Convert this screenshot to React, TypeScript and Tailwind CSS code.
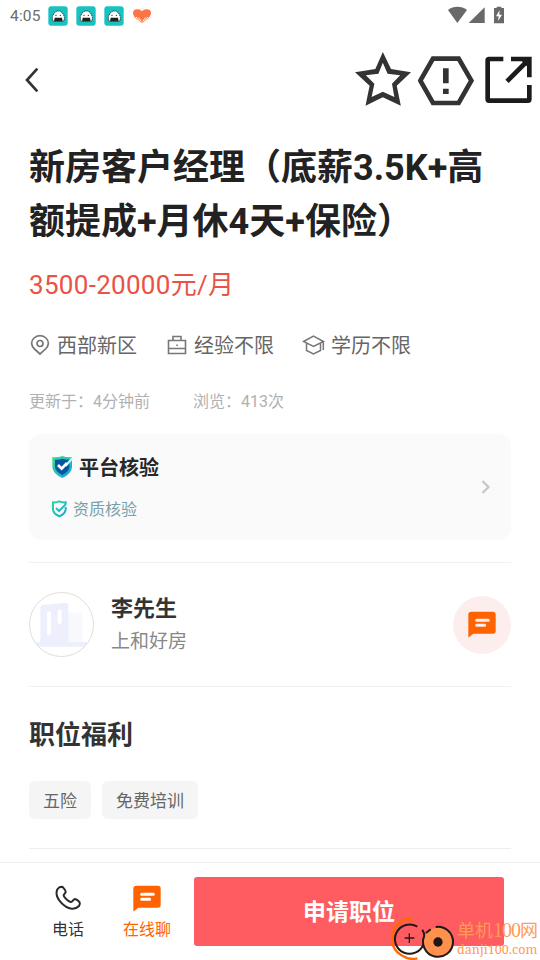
import React from "react";

function AppBadge() {
  return (
    <svg width="20" height="20" viewBox="0 0 60 60">
      <rect x="1" y="1" width="58" height="58" rx="9" fill="#17c2c0" />
      <path d="M13 44V31L19 20L27 15H36L43 20L49 31V44L43 46H19Z" fill="#fff" stroke="#173c3c" strokeWidth="3" strokeDasharray="4 2" />
      <circle cx="24" cy="28" r="2" fill="#222" />
      <circle cx="37" cy="28" r="2" fill="#222" />
      <path d="M20 35H42L44 46H18Z" fill="#1f2020" />
    </svg>
  );
}

function HeartIcon() {
  return (
    <svg width="20" height="18" viewBox="0 0 60 54">
      <circle cx="30" cy="26" r="24" fill="#fff3e4" />
      <path d="M30 47C17 38 3 30 3 17C3 4 23 4 30 13C37 4 57 4 57 17C57 30 43 38 30 47Z" fill="#fb7546" />
      <path d="M12 30L25 46M19 31L28 43M48 30L35 46M41 31L32 43" stroke="#fff1df" strokeWidth="3" />
    </svg>
  );
}

function StatusBar() {
  return (
    <div className="flex h-8 shrink-0 items-center pl-[10px] pr-[35px]">
      <span className="w-[38px] pt-px text-[15.5px] tracking-[0.2px] text-[#6c6c6c]">4:05</span>
      <div className="flex items-center gap-2">
        <AppBadge />
        <AppBadge />
        <AppBadge />
        <HeartIcon />
      </div>
      <svg className="mb-[3px] ml-auto" width="57" height="18" viewBox="324 16 171 54" fill="#696969">
        <path d="M324 28C340 15 365 15 381 28L352 67Z" />
        <path d="M434 20V67H386Z" />
        <path d="M470 18H484V22H492V68H462V22H470Z" />
        <path d="M479 29L468 47H476L474 61L486 42H478Z" fill="#fff" />
      </svg>
    </div>
  );
}

function Header() {
  return (
    <header className="flex h-24 shrink-0 items-center pl-6 pr-2">
      <svg className="mr-auto" width="16" height="26" viewBox="72 201 48 78" fill="none" stroke="#333" strokeWidth="8">
        <path d="M112 206L81 240L112 274" strokeLinejoin="miter" />
      </svg>
      <svg className="mb-[2px]" width="56" height="54" viewBox="45 157 165 162" preserveAspectRatio="none" fill="#333">
        <path fillRule="evenodd" d="M127 157L151 208L210 218L168 258L180 318L127 293L76 318L88 258L45 218L105 208ZM127 189L114 222L77 227L102 252L94 292L127 276L161 292L154 252L178 227L141 222Z" />
      </svg>
      <svg className="ml-[7px] mt-px" width="56" height="50" viewBox="233 167 168 150">
        <path d="M278 175H355L393 241L355 308H278L240 241Z" fill="none" stroke="#333" strokeWidth="14" />
        <path d="M308 204H325V249H308ZM308 265H325V281H308Z" fill="#333" />
      </svg>
      <svg className="ml-[11px]" width="47" height="48" viewBox="435 170 141 144" fill="none" stroke="#1b1b1b" strokeWidth="14">
        <path d="M490 179H447Q443 179 443 183V300Q443 304 447 304H564Q568 304 568 300V257" />
        <path d="M513 179H568V234M568 179L501 246" />
        <path d="M540 180H567V207Z" fill="#1b1b1b" stroke="none" />
      </svg>
    </header>
  );
}

function PinIcon() {
  return (
    <svg width="20" height="22" viewBox="0 0 20 22" fill="none" stroke="#777" strokeWidth="1.7">
      <path d="M10 20L4.5 15C.8 11.500.7 7.200 4 4C7.300.9 12.700.9 16 4C19.300 7.200 19.200 11.500 15.500 15Z" />
      <circle cx="10" cy="9.500" r="3" />
    </svg>
  );
}

function CaseIcon() {
  return (
    <svg width="20" height="22" viewBox="0 0 20 22" fill="none" stroke="#777" strokeWidth="1.600">
      <path d="M1.500 6.500H18.500V19.500H1.500ZM6 6V2.500H14V6M1.500 14.500H18.500M10 10.500V12" />
    </svg>
  );
}

function CapIcon() {
  return (
    <svg className="-ml-px" width="24" height="22" viewBox="0 0 24 22" fill="none" stroke="#777" strokeWidth="1.500">
      <path d="M1.500 7.500L11.500 2L21.500 7.500L11.500 12.500ZM4.500 9.300V16.500L11.500 20L18.500 16.500V9.300M21.300 8V16" />
    </svg>
  );
}

function ChatIcon({ line }: { line: string }) {
  return (
    <svg width="28" height="27" viewBox="0 0 84 81">
      <path d="M10 2H75Q83 2 83 10V60Q83 68 75 68H16L3 79Q1 80 1 76V10Q1 2 10 2Z" fill="#ff6200" />
      <path d="M26 28H61M26 43H50" stroke={line} strokeWidth="9" strokeLinecap="round" />
    </svg>
  );
}

function VerifyCard() {
  return (
    <section className="flex h-[106px] items-center rounded-xl bg-[#fafafa] pl-[22px] pr-5">
      <div>
        <div className="flex h-6 items-center gap-[6px]">
          <svg className="mt-px" width="22" height="24" viewBox="0 0 66 72">
            <defs>
              <linearGradient id="shield" x1="0" y1="0" x2="1" y2="1">
                <stop offset="0" stopColor="#35dc91" />
                <stop offset=".5" stopColor="#27bfbb" />
                <stop offset="1" stopColor="#159be3" />
              </linearGradient>
            </defs>
            <path d="M4 6Q20 8 34 3Q48 8 63 6V36Q62 56 34 69Q5 56 4 36Z" fill="url(#shield)" />
            <path d="M12 14Q24 15 34 11Q45 15 55 14V37Q54 50 34 60Q13 50 12 37Z" fill="#07569f" />
            <path d="M42 29L64 5V14L46 35Z" fill="#caffe4" />
            <path d="M21 30L32 41L48 24" fill="none" stroke="#fff" strokeWidth="8" />
          </svg>
          <h2 className="pt-[3px] text-[20px] font-bold leading-6 text-[#282828]">平台核验</h2>
        </div>
        <div className="mt-[18px] flex h-6 items-center gap-[5px]">
          <svg className="mt-[2px]" width="17" height="18" viewBox="0 0 51 54" fill="none" stroke="url(#mini)" strokeWidth="6">
            <defs>
              <linearGradient id="mini" x1="0" y1="0" x2="1" y2="1">
                <stop offset="0" stopColor="#26d99c" />
                <stop offset="1" stopColor="#19a9de" />
              </linearGradient>
            </defs>
            <path d="M44 12V7Q34 8 25 4Q16 8 6 7V28Q7 41 25 49Q43 41 44 28V21" />
            <path d="M15 24L24 33L45 12" />
          </svg>
          <span className="pt-[3px] text-[16px] leading-6 text-[#789fab]">资质核验</span>
        </div>
      </div>
      <svg className="ml-auto" width="10" height="16" viewBox="0 0 10 16" fill="none" stroke="#c7c7c7" strokeWidth="2.300">
        <path d="M1.500 2L7.500 8L1.500 14" />
      </svg>
    </section>
  );
}

function Recruiter() {
  return (
    <section className="flex h-[125px] items-center border-b border-t border-[#f1f1f1]">
      <svg width="65" height="65" viewBox="0 0 195 195">
        <defs>
          <clipPath id="avatar"><circle cx="97.500" cy="97.500" r="95" /></clipPath>
        </defs>
        <g clipPath="url(#avatar)">
          <path d="M118 62H151Q161 62 161 73V151H118Z" fill="#f8f8fd" />
          <path d="M34 46Q34 40 41 39L110 32Q118 32 118 40V150H195V164H0V150H34Z" fill="#edf0fc" />
          <path d="M60 64V124M92 59V90" stroke="#fff" strokeWidth="12" strokeLinecap="round" />
        </g>
        <circle cx="97.500" cy="97.500" r="96" fill="none" stroke="#dedede" strokeWidth="3" />
      </svg>
      <div className="ml-[17px] pt-px">
        <h2 className="text-[22px] font-bold leading-8 text-[#333]">李先生</h2>
        <p className="pt-px text-[19px] leading-8 text-[#888]">上和好房</p>
      </div>
      <div className="ml-auto flex size-[58px] items-center justify-center rounded-full bg-[#fdeeee]">
        <ChatIcon line="#fdeeee" />
      </div>
    </section>
  );
}

function Watermark() {
  return (
    <div className="absolute bottom-0 right-0 flex h-[44px] w-[149px] items-center">
      <svg className="shrink-0" width="64" height="44" viewBox="363 183 192 132" fill="none">
        <path d="M423 192Q413 186 403 194C358 216 353 275 394 301Q417 316 442 310" stroke="#ff6b00" strokeWidth="7" />
        <path d="M400 198Q414 183 428 199" stroke="#ff6b00" strokeWidth="9" />
        <path d="M442 215A44 44 0 1 0 460 268" stroke="#241818" strokeWidth="6" />
        <path d="M457 224C466 239 466 252 461 267" stroke="#241818" strokeWidth="6" />
        <circle cx="504" cy="261" r="43" fill="#ff914d" />
        <path d="M497 216A45 45 0 1 1 463 242M468 234L482 223" stroke="#241818" strokeWidth="6" />
        <circle cx="504" cy="261" r="14" fill="#211515" />
        <path d="M404 249H433M418 235V264" stroke="#241818" strokeWidth="4" />
      </svg>
      <div className="whitespace-nowrap pl-[2px] pt-[2px] font-['Liberation_Serif','Noto_Sans_CJK_SC',serif] text-[#ff9b55]">
        <div className="text-[18px] leading-[20px]">单机<span className="text-[20px] tracking-[-1px]">100</span>网</div>
        <div className="font-['Noto_Serif','DejaVu_Serif',serif] text-[12.600px] leading-[17px]">danji100.com</div>
      </div>
    </div>
  );
}

export default function App() {
  return (
    <div className="relative flex h-[960px] w-[540px] flex-col overflow-hidden bg-white font-['Roboto','Noto_Sans_CJK_SC',sans-serif]">
      <StatusBar />
      <Header />
      <main className="flex-1 px-[29px] pt-[13px]">
        <h1 className="whitespace-nowrap text-[36px] font-bold leading-[54px] text-[#222]">
          新房客户经理（底薪3.5K+高
          <br />
          额提成+月休4天+保险）
        </h1>
        <p className="mt-4 text-[26px] leading-10 tracking-[0.3px] text-[#ea5245]">3500-20000元/月</p>
        <div className="mt-[25px] flex h-[30px] items-center text-[20px] text-[#666]">
          <div className="flex w-[138px] items-center gap-[7px] pl-px"><PinIcon /><span className="pt-[2px]">西部新区</span></div>
          <div className="flex w-[136px] items-center gap-[7px]"><CaseIcon /><span className="pt-[2px]">经验不限</span></div>
          <div className="flex items-center gap-[5px]"><CapIcon /><span className="pt-[2px]">学历不限</span></div>
        </div>
        <div className="mt-[29px] flex h-6 items-center pt-[2px] text-[16px] text-[#b1b1b1]">
          <span className="w-[164px]">更新于：4分钟前</span>
          <span>浏览：413次</span>
        </div>
        <div className="mb-[22px] mt-[21px]"><VerifyCard /></div>
        <Recruiter />
        <section className="h-[162px] border-b border-[#eee] pt-7">
          <h2 className="text-[26px] font-bold leading-10 text-[#333]">职位福利</h2>
          <div className="mt-[26px] flex gap-[11px] text-[17px] text-[#666]">
            <span className="flex h-[38px] items-center rounded-md bg-[#f5f5f5] px-[14px] pt-[3px]">五险</span>
            <span className="flex h-[38px] items-center rounded-md bg-[#f5f5f5] px-[14px] pt-[3px]">免费培训</span>
          </div>
        </section>
      </main>
      <footer className="flex h-[98px] shrink-0 items-start border-t border-[#eee] pt-[14px]">
        <div className="ml-7 flex w-20 flex-col items-center pt-[7px] text-[16px] leading-6 text-[#333]">
          <svg width="28" height="28" viewBox="0 0 84 84" fill="none" stroke="#292929" strokeWidth="6">
            <path d="M16 10L25 8Q36 20 35 24C34 28 28 31 29 35C32 43 43 52 50 54C56 55 58 45 63 45Q71 47 77 55Q79 59 75 66C70 71 62 75 53 74C29 71 4 42 8 22Q10 15 16 10Z" strokeLinejoin="round" />
          </svg>
          <span className="mt-[6px]">电话</span>
        </div>
        <div className="flex w-[78px] flex-col items-center pt-2 text-[16px] leading-6 text-[#ff6200]">
          <ChatIcon line="#fff" />
          <span className="mt-[6px]">在线聊</span>
        </div>
        <button className="ml-2 h-[69px] w-[310px] rounded-[3px] bg-[#ff5c61] pt-1 text-[23px] font-bold text-white">申请职位</button>
      </footer>
      <Watermark />
    </div>
  );
}
